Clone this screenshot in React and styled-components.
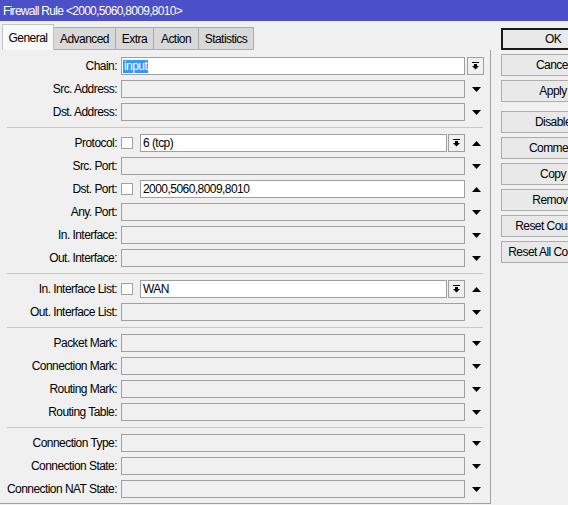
import React from 'react';
import styled, { createGlobalStyle } from 'styled-components';

const Global = createGlobalStyle`
  html, body { margin: 0; padding: 0; background: #f0f0f0; overflow: hidden; }
  body {
    font-family: "Liberation Sans", Arial, sans-serif;
    font-size: 12px;
    letter-spacing: -0.55px;
    color: #000;
  }
  * { box-sizing: border-box; }
`;

const Window = styled.div`
  width: 568px;
  height: 505px;
  overflow: hidden;
  background: #f0f0f0;
  display: flex;
  flex-direction: column;
`;

const TitleBar = styled.div`
  height: 21px;
  flex-shrink: 0;
  background: #4c50c8;
  color: #fff;
  padding-left: 3px;
  letter-spacing: -0.7px;
  display: flex;
  align-items: center;
  white-space: nowrap;
`;

const Body = styled.div`
  display: flex;
  flex: 1;
  min-height: 0;
`;

const Left = styled.div`
  width: 491px;
  flex-shrink: 0;
  display: flex;
  flex-direction: column;
`;

const TabStrip = styled.div`
  height: 29px;
  padding-left: 2px;
  display: flex;
  align-items: flex-end;
`;

const Tab = styled.div`
  width: ${p => p.$w}px;
  height: ${p => (p.$active ? 26 : 23)}px;
  margin-right: -1px;
  display: flex;
  align-items: center;
  justify-content: center;
  white-space: nowrap;
  background: ${p => (p.$active ? '#f9f9f9' : '#d9d9d9')};
  border: 1px solid ${p => (p.$active ? '#c4c4c4' : '#acacac')};
  border-bottom: ${p => (p.$active ? 'none' : '1px solid #acacac')};
  position: relative;
  z-index: ${p => (p.$active ? 1 : 0)};
`;

const Panel = styled.div`
  height: 454px;
  border-right: 1px solid #a0a0a0;
  border-bottom: 1px solid #a0a0a0;
  padding-right: 6px;
  display: flex;
  flex-direction: column;
`;

const Group = styled.div`
  display: flex;
  flex-direction: column;
  gap: 5px;
  padding-top: ${p => (p.$first ? 7 : 6)}px;
  padding-bottom: ${p => (p.$last ? 5 : 6)}px;
`;

const Divider = styled.div`
  height: 1px;
  margin: 0 1px 0 7px;
  background: #c8c8c8;
  flex-shrink: 0;
`;

const Row = styled.div`
  display: flex;
  align-items: center;
  height: 18px;
`;

const Label = styled.div`
  width: 117px;
  margin-right: 4px;
  text-align: right;
  white-space: nowrap;
`;

const Value = styled.div`
  width: 344px;
  height: 18px;
  display: flex;
  align-items: center;
`;

const Side = styled.div`
  width: 19px;
  height: 18px;
  display: flex;
  align-items: center;
  justify-content: flex-end;
`;

const Field = styled.div`
  flex: 1;
  height: 18px;
  border: 1px solid #a0a0a0;
  background: ${p => (p.$filled ? '#fff' : '#f0f0f0')};
  padding-left: 2px;
  display: flex;
  align-items: center;
  white-space: nowrap;
  overflow: hidden;
`;

const Selected = styled.span`
  background: #3399ff;
  color: #fff;
  line-height: 13px;
  margin-left: -1px;
  padding: 0 1px;
`;

const Check = styled.div`
  width: 12px;
  height: 12px;
  flex-shrink: 0;
  border: 1px solid #a0a0a0;
  background: #fff;
  margin-right: 7px;
`;

const DropButton = styled.div`
  width: 17px;
  height: 18px;
  flex-shrink: 0;
  margin-left: ${p => (p.$inline ? 1 : 0)}px;
  border: 1px solid #a0a0a0;
  background: #f0f0f0;
  display: flex;
  align-items: center;
  justify-content: center;
`;

const Arrow = styled.svg`
  display: block;
  margin-right: 3px;
`;

const Actions = styled.div`
  margin-left: 10px;
  padding-top: 7px;
  display: flex;
  flex-direction: column;
  gap: 4px;
  flex-shrink: 0;
`;

const Button = styled.div`
  width: 104px;
  height: 22px;
  flex-shrink: 0;
  border: 1px solid #adadad;
  background: #e9e9e9;
  display: flex;
  align-items: center;
  justify-content: center;
  white-space: nowrap;
  margin-top: ${p => (p.$spaced ? 5 : 0)}px;
  ${p => p.$default && 'border-color: #1a1a1a; box-shadow: inset 0 0 0 1px #1a1a1a;'}
`;

const DropIcon = () => (
  <svg width="7" height="8" viewBox="0 0 7 8">
    <rect x="0" y="0" width="7" height="1" fill="#000" />
    <rect x="2" y="2" width="3" height="2" fill="#000" />
    <polygon points="0,4 7,4 3.5,7.5" fill="#000" />
  </svg>
);

const Down = () => (
  <Arrow width="9" height="5" viewBox="0 0 9 5">
    <polygon points="0,0 9,0 4.5,5" fill="#000" />
  </Arrow>
);

const Up = () => (
  <Arrow width="9" height="5" viewBox="0 0 9 5">
    <polygon points="0,5 9,5 4.5,0" fill="#000" />
  </Arrow>
);

const tabs = [
  ['General', 52, true],
  ['Advanced', 63],
  ['Extra', 39],
  ['Action', 46],
  ['Statistics', 56],
];

const Plain = ({ label }) => (
  <Row>
    <Label>{label}:</Label>
    <Value><Field /></Value>
    <Side><Down /></Side>
  </Row>
);

const markRows = ['Packet Mark', 'Connection Mark', 'Routing Mark', 'Routing Table'];

export default function App() {
  return (
    <>
      <Global />
      <Window>
        <TitleBar>Firewall Rule &lt;2000,5060,8009,8010&gt;</TitleBar>
        <Body>
          <Left>
            <TabStrip>
              {tabs.map(([t, w, a]) => (
                <Tab key={t} $w={w} $active={a}>{t}</Tab>
              ))}
            </TabStrip>
            <Panel>
              <Group $first>
                <Row>
                  <Label>Chain:</Label>
                  <Value><Field $filled><Selected>input</Selected></Field></Value>
                  <Side><DropButton><DropIcon /></DropButton></Side>
                </Row>
                <Plain label="Src. Address" />
                <Plain label="Dst. Address" />
              </Group>
              <Divider />
              <Group>
                <Row>
                  <Label>Protocol:</Label>
                  <Value>
                    <Check />
                    <Field $filled>6 (tcp)</Field>
                    <DropButton $inline><DropIcon /></DropButton>
                  </Value>
                  <Side><Up /></Side>
                </Row>
                <Plain label="Src. Port" />
                <Row>
                  <Label>Dst. Port:</Label>
                  <Value>
                    <Check />
                    <Field $filled>2000,5060,8009,8010</Field>
                  </Value>
                  <Side><Up /></Side>
                </Row>
                <Plain label="Any. Port" />
                <Plain label="In. Interface" />
                <Plain label="Out. Interface" />
              </Group>
              <Divider />
              <Group>
                <Row>
                  <Label>In. Interface List:</Label>
                  <Value>
                    <Check />
                    <Field $filled>WAN</Field>
                    <DropButton $inline><DropIcon /></DropButton>
                  </Value>
                  <Side><Up /></Side>
                </Row>
                <Plain label="Out. Interface List" />
              </Group>
              <Divider />
              <Group>
                {markRows.map(l => <Plain key={l} label={l} />)}
              </Group>
              <Divider />
              <Group $last>
                <Plain label="Connection Type" />
                <Plain label="Connection State" />
                <Plain label="Connection NAT State" />
              </Group>
            </Panel>
          </Left>
          <Actions>
            <Button $default>OK</Button>
            <Button>Cancel</Button>
            <Button>Apply</Button>
            <Button $spaced>Disable</Button>
            <Button>Comment</Button>
            <Button>Copy</Button>
            <Button>Remove</Button>
            <Button>Reset Counters</Button>
            <Button>Reset All Counters</Button>
          </Actions>
        </Body>
      </Window>
    </>
  );
}
